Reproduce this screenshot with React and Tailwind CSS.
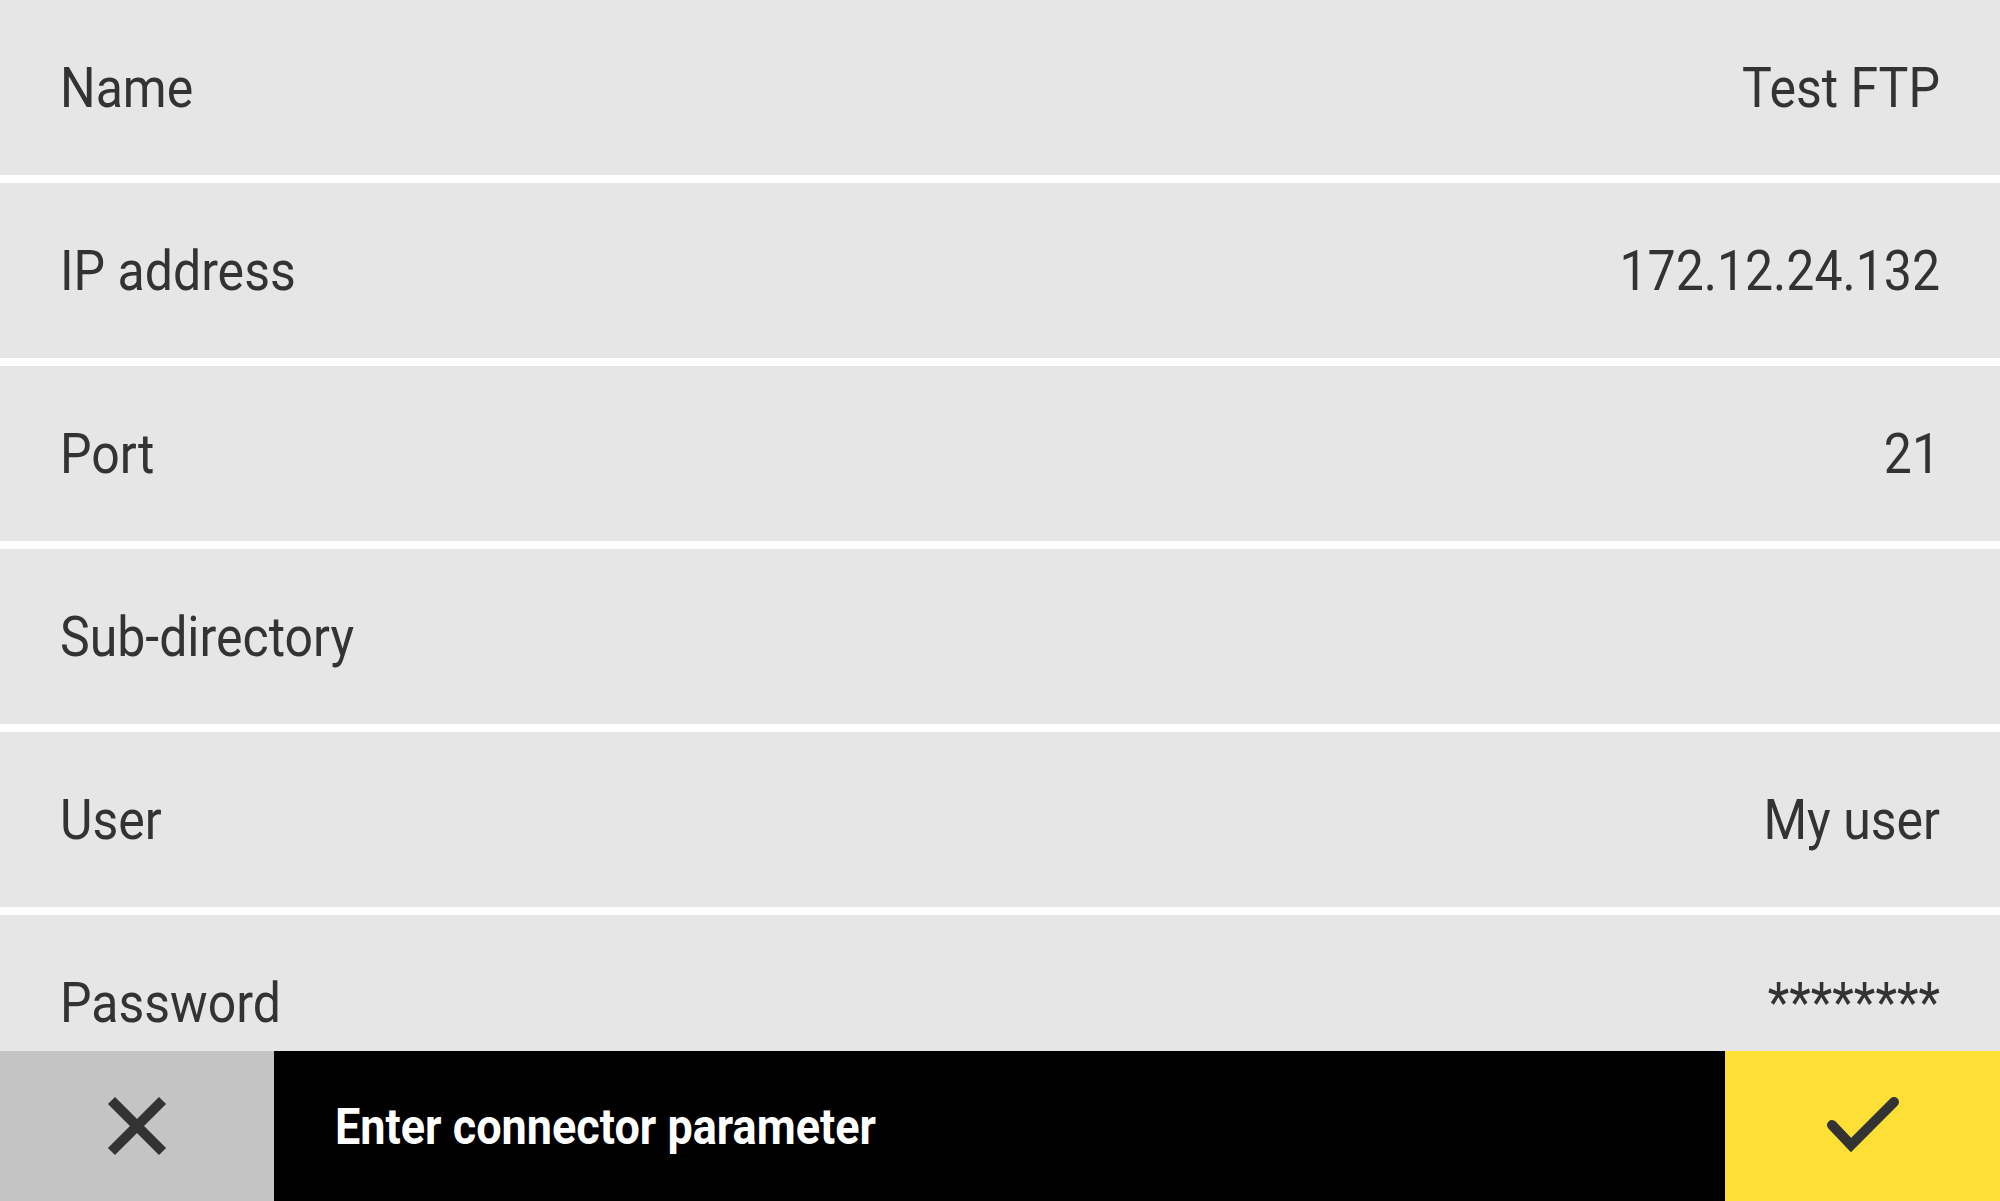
import React from "react";

const rows = [
  { label: "Name", value: "Test FTP" },
  { label: "IP address", value: "172.12.24.132" },
  { label: "Port", value: "21" },
  { label: "Sub-directory", value: "" },
  { label: "User", value: "My user" },
  { label: "Password", value: "********" },
];

function ParamRow({ label, value }) {
  return (
    <div className="h-[175px] shrink-0 flex items-center justify-between px-[60px] bg-[#e6e6e6] text-[#333333] text-[50px] leading-none">
      <span className="inline-block scale-y-[1.12]">{label}</span>
      <span className="inline-block scale-y-[1.12]">{value}</span>
    </div>
  );
}

export default function App() {
  return (
    <div
      className="w-full h-[1201px] flex flex-col overflow-hidden bg-white"
      style={{ fontFamily: "Roboto, 'Noto Sans', sans-serif" }}
    >
      <div className="flex-1 flex flex-col gap-[8px] overflow-hidden">
        {rows.map((r) => (
          <ParamRow key={r.label} label={r.label} value={r.value} />
        ))}
      </div>

      <div className="h-[150px] shrink-0 flex">
        <button className="w-[274px] h-full bg-[#c4c4c4] flex items-center justify-center">
          <svg width="60" height="60" viewBox="0 0 60 60">
            <path
              d="M8 8L52 52M52 8L8 52"
              stroke="#333333"
              strokeWidth="10"
              strokeLinecap="square"
              fill="none"
            />
          </svg>
        </button>
        <div className="flex-1 bg-black flex items-center pl-[61px]">
          <span className="inline-block scale-y-[1.1] text-white font-bold text-[45px] leading-none">
            Enter connector parameter
          </span>
        </div>
        <button className="w-[275px] h-full bg-[#fddf36] flex items-center justify-center">
          <svg width="76" height="60" viewBox="0 0 76 60" className="-mt-[4px]">
            <path
              d="M7 31L26 51L69 8"
              stroke="#333333"
              strokeWidth="10"
              strokeLinecap="round"
              strokeLinejoin="miter"
              fill="none"
            />
          </svg>
        </button>
      </div>
    </div>
  );
}
